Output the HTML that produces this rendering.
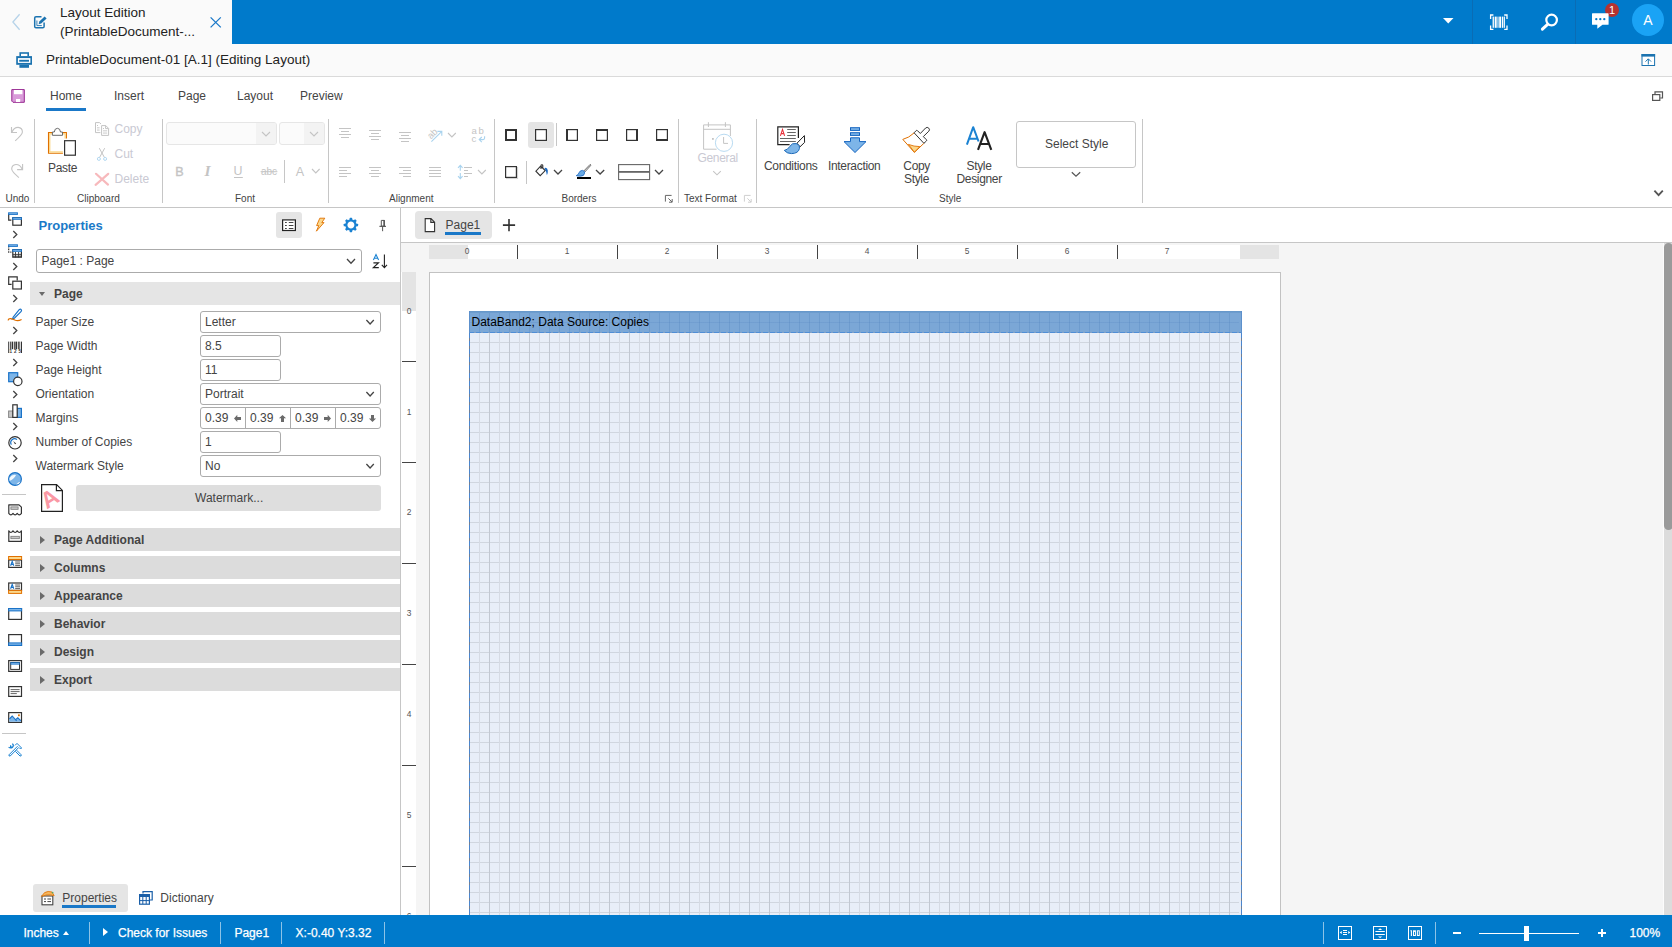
<!DOCTYPE html>
<html><head><meta charset="utf-8"><title>Layout Edition</title>
<style>
html,body{margin:0;padding:0}
body{width:1672px;height:947px;overflow:hidden;position:relative;background:#fff;font-family:"Liberation Sans",sans-serif;}
body>div,body>svg{position:absolute;}
.t{white-space:nowrap;}
svg{overflow:visible}
</style></head>
<body>
<div style="left:0px;top:0px;width:1672px;height:44px;background:#007acb"></div>
<div style="left:0px;top:0px;width:232px;height:44px;background:#fafafa"></div>
<div class="t" style="left:60px;top:6px;font-size:13.5px;line-height:13.5px;color:#222;">Layout Edition</div>
<div class="t" style="left:60px;top:25px;font-size:13.5px;line-height:13.5px;color:#222;">(PrintableDocument-...</div>
<div style="left:1472px;top:0px;width:1px;height:44px;background:#0a6cb4"></div>
<div style="left:1575px;top:0px;width:1px;height:44px;background:#0a6cb4"></div>
<div style="left:1632px;top:4px;width:32px;height:32px;background:#1aa3f5;border-radius:50%"></div>
<div class="t" style="left:1632px;top:13px;font-size:14px;line-height:14px;color:#fff;width:32px;text-align:center;">A</div>
<div style="left:1605px;top:3px;width:14px;height:14px;background:#b5322f;border-radius:50%"></div>
<div class="t" style="left:1605px;top:5px;font-size:11px;line-height:11px;color:#fff;width:14px;text-align:center;">1</div>
<div style="left:0px;top:44px;width:1672px;height:32px;background:#fafafa"></div>
<div style="left:0px;top:76px;width:1672px;height:1px;background:#dadada"></div>
<div class="t" style="left:46px;top:53px;font-size:13.5px;line-height:13.5px;color:#222;">PrintableDocument-01 [A.1] (Editing Layout)</div>
<div style="left:0px;top:77px;width:1672px;height:130px;background:#fff"></div>
<div class="t" style="left:50px;top:90px;font-size:12px;line-height:12px;color:#444;">Home</div>
<div class="t" style="left:114px;top:90px;font-size:12px;line-height:12px;color:#444;">Insert</div>
<div class="t" style="left:178px;top:90px;font-size:12px;line-height:12px;color:#444;">Page</div>
<div class="t" style="left:237px;top:90px;font-size:12px;line-height:12px;color:#444;">Layout</div>
<div class="t" style="left:300px;top:90px;font-size:12px;line-height:12px;color:#444;">Preview</div>
<div style="left:46px;top:108px;width:40px;height:3px;background:#1a78c8"></div>
<div style="left:0px;top:207px;width:1672px;height:1px;background:#c6c6c6"></div>
<div style="left:34px;top:119px;width:1px;height:84px;background:#c6c6c6"></div>
<div style="left:162px;top:119px;width:1px;height:84px;background:#c6c6c6"></div>
<div style="left:328px;top:119px;width:1px;height:84px;background:#c6c6c6"></div>
<div style="left:494px;top:119px;width:1px;height:84px;background:#c6c6c6"></div>
<div style="left:678px;top:119px;width:1px;height:84px;background:#c6c6c6"></div>
<div style="left:756px;top:119px;width:1px;height:84px;background:#c6c6c6"></div>
<div style="left:1142px;top:119px;width:1px;height:84px;background:#c6c6c6"></div>
<div class="t" style="left:5.5px;top:194px;font-size:10px;line-height:10px;color:#444;">Undo</div>
<div class="t" style="left:77px;top:194px;font-size:10px;line-height:10px;color:#444;">Clipboard</div>
<div class="t" style="left:235px;top:194px;font-size:10px;line-height:10px;color:#444;">Font</div>
<div class="t" style="left:389px;top:194px;font-size:10px;line-height:10px;color:#444;">Alignment</div>
<div class="t" style="left:561.5px;top:194px;font-size:10px;line-height:10px;color:#444;">Borders</div>
<div class="t" style="left:684px;top:194px;font-size:10px;line-height:10px;color:#444;">Text Format</div>
<div class="t" style="left:939px;top:194px;font-size:10px;line-height:10px;color:#444;">Style</div>
<div class="t" style="left:48px;top:162px;font-size:12px;line-height:12px;color:#444;letter-spacing:-0.33px">Paste</div>
<div class="t" style="left:114.5px;top:123px;font-size:12px;line-height:12px;color:#c9c9d3;">Copy</div>
<div class="t" style="left:114.5px;top:148px;font-size:12px;line-height:12px;color:#c9c9d3;">Cut</div>
<div class="t" style="left:114.5px;top:173px;font-size:12px;line-height:12px;color:#c9c9d3;">Delete</div>
<div style="left:166px;top:122px;width:111px;height:23px;box-sizing:border-box;border:1px solid #e6e6e6;border-radius:3px;background:#fbfbfb"></div>
<div style="left:256px;top:123px;width:20px;height:21px;background:#f3f3f3;border-radius:0 2px 2px 0"></div>
<div style="left:279px;top:122px;width:46px;height:23px;box-sizing:border-box;border:1px solid #e6e6e6;border-radius:3px;background:#fbfbfb"></div>
<div style="left:304px;top:123px;width:20px;height:21px;background:#f3f3f3;border-radius:0 2px 2px 0"></div>
<div style="left:284px;top:160px;width:1px;height:23px;background:#c6c6c6"></div>
<div style="left:556px;top:123px;width:1px;height:23px;background:#c6c6c6"></div>
<div style="left:526px;top:161px;width:1px;height:23px;background:#c6c6c6"></div>
<div style="left:528px;top:122px;width:26px;height:26px;background:#e5e5e5;border-radius:3px"></div>
<div class="t" style="left:697.5px;top:152px;font-size:12px;line-height:12px;color:#c9c9d3;letter-spacing:-0.33px">General</div>
<div class="t" style="left:764px;top:160px;font-size:12px;line-height:12px;color:#444;letter-spacing:-0.33px">Conditions</div>
<div class="t" style="left:828px;top:160px;font-size:12px;line-height:12px;color:#444;letter-spacing:-0.33px">Interaction</div>
<div class="t" style="left:903.3px;top:160px;font-size:12px;line-height:12px;color:#444;letter-spacing:-0.33px">Copy</div>
<div class="t" style="left:904px;top:173px;font-size:12px;line-height:12px;color:#444;letter-spacing:-0.33px">Style</div>
<div class="t" style="left:966.5px;top:160px;font-size:12px;line-height:12px;color:#444;letter-spacing:-0.33px">Style</div>
<div class="t" style="left:956.5px;top:173px;font-size:12px;line-height:12px;color:#444;letter-spacing:-0.33px">Designer</div>
<div style="left:1016px;top:121px;width:120px;height:47px;box-sizing:border-box;border:1px solid #c6c6c6;border-radius:3px;background:#fff"></div>
<div class="t" style="left:1045px;top:138px;font-size:12px;line-height:12px;color:#444;">Select Style</div>
<div style="left:0px;top:208px;width:400px;height:707px;background:#fff"></div>
<div style="left:400px;top:208px;width:1px;height:707px;background:#c6c6c6"></div>
<div class="t" style="left:38.5px;top:219px;font-size:13px;line-height:13px;color:#1a7ac8;font-weight:bold;">Properties</div>
<div style="left:276px;top:212px;width:26px;height:26px;background:#e5e5e5;border-radius:3px"></div>
<div style="left:36px;top:249px;width:326px;height:24px;box-sizing:border-box;border:1px solid #ababab;border-radius:3px;background:#fff"></div>
<div class="t" style="left:41.5px;top:255px;font-size:12px;line-height:12px;color:#444;">Page1 : Page</div>
<div style="left:30px;top:282px;width:370px;height:23px;background:#e5e5e5"></div>
<div class="t" style="left:54px;top:288px;font-size:12px;line-height:12px;color:#444;font-weight:bold;">Page</div>
<div style="left:39px;top:292px;width:0;height:0;border-left:3.5px solid transparent;border-right:3.5px solid transparent;border-top:4.5px solid #6a6a6a"></div>
<div class="t" style="left:35.5px;top:316px;font-size:12px;line-height:12px;color:#444;">Paper Size</div>
<div style="left:200px;top:311px;width:181px;height:22px;box-sizing:border-box;border:1px solid #ababab;border-radius:3px;background:#fff"></div>
<div class="t" style="left:205px;top:316px;font-size:12px;line-height:12px;color:#444;">Letter</div>
<div class="t" style="left:35.5px;top:340px;font-size:12px;line-height:12px;color:#444;">Page Width</div>
<div style="left:200px;top:335px;width:81px;height:22px;box-sizing:border-box;border:1px solid #ababab;border-radius:3px;background:#fff"></div>
<div class="t" style="left:205px;top:340px;font-size:12px;line-height:12px;color:#444;">8.5</div>
<div class="t" style="left:35.5px;top:364px;font-size:12px;line-height:12px;color:#444;">Page Height</div>
<div style="left:200px;top:359px;width:81px;height:22px;box-sizing:border-box;border:1px solid #ababab;border-radius:3px;background:#fff"></div>
<div class="t" style="left:205px;top:364px;font-size:12px;line-height:12px;color:#444;">11</div>
<div class="t" style="left:35.5px;top:388px;font-size:12px;line-height:12px;color:#444;">Orientation</div>
<div style="left:200px;top:383px;width:181px;height:22px;box-sizing:border-box;border:1px solid #ababab;border-radius:3px;background:#fff"></div>
<div class="t" style="left:205px;top:388px;font-size:12px;line-height:12px;color:#444;">Portrait</div>
<div class="t" style="left:35.5px;top:412px;font-size:12px;line-height:12px;color:#444;">Margins</div>
<div style="left:200px;top:407px;width:181px;height:22px;box-sizing:border-box;border:1px solid #ababab;border-radius:3px;background:#fff"></div>
<div class="t" style="left:205px;top:412px;font-size:12px;line-height:12px;color:#444;">0.39</div>
<div class="t" style="left:250px;top:412px;font-size:12px;line-height:12px;color:#444;">0.39</div>
<div style="left:245px;top:408px;width:1px;height:20px;background:#ababab"></div>
<div class="t" style="left:295px;top:412px;font-size:12px;line-height:12px;color:#444;">0.39</div>
<div style="left:290px;top:408px;width:1px;height:20px;background:#ababab"></div>
<div class="t" style="left:340px;top:412px;font-size:12px;line-height:12px;color:#444;">0.39</div>
<div style="left:335px;top:408px;width:1px;height:20px;background:#ababab"></div>
<div class="t" style="left:35.5px;top:436px;font-size:12px;line-height:12px;color:#444;">Number of Copies</div>
<div style="left:200px;top:431px;width:81px;height:22px;box-sizing:border-box;border:1px solid #ababab;border-radius:3px;background:#fff"></div>
<div class="t" style="left:205px;top:436px;font-size:12px;line-height:12px;color:#444;">1</div>
<div class="t" style="left:35.5px;top:460px;font-size:12px;line-height:12px;color:#444;">Watermark Style</div>
<div style="left:200px;top:455px;width:181px;height:22px;box-sizing:border-box;border:1px solid #ababab;border-radius:3px;background:#fff"></div>
<div class="t" style="left:205px;top:460px;font-size:12px;line-height:12px;color:#444;">No</div>
<div style="left:76px;top:485px;width:305px;height:26px;background:#dedede;border-radius:3px"></div>
<div class="t" style="left:195px;top:492px;font-size:12px;line-height:12px;color:#444;">Watermark...</div>
<div style="left:30px;top:528px;width:370px;height:23px;background:#dcdcdc"></div>
<div class="t" style="left:54px;top:534px;font-size:12px;line-height:12px;color:#444;font-weight:bold;">Page Additional</div>
<div style="left:40px;top:535.5px;width:0;height:0;border-top:4px solid transparent;border-bottom:4px solid transparent;border-left:5px solid #6a6a6a"></div>
<div style="left:30px;top:556px;width:370px;height:23px;background:#dcdcdc"></div>
<div class="t" style="left:54px;top:562px;font-size:12px;line-height:12px;color:#444;font-weight:bold;">Columns</div>
<div style="left:40px;top:563.5px;width:0;height:0;border-top:4px solid transparent;border-bottom:4px solid transparent;border-left:5px solid #6a6a6a"></div>
<div style="left:30px;top:584px;width:370px;height:23px;background:#dcdcdc"></div>
<div class="t" style="left:54px;top:590px;font-size:12px;line-height:12px;color:#444;font-weight:bold;">Appearance</div>
<div style="left:40px;top:591.5px;width:0;height:0;border-top:4px solid transparent;border-bottom:4px solid transparent;border-left:5px solid #6a6a6a"></div>
<div style="left:30px;top:612px;width:370px;height:23px;background:#dcdcdc"></div>
<div class="t" style="left:54px;top:618px;font-size:12px;line-height:12px;color:#444;font-weight:bold;">Behavior</div>
<div style="left:40px;top:619.5px;width:0;height:0;border-top:4px solid transparent;border-bottom:4px solid transparent;border-left:5px solid #6a6a6a"></div>
<div style="left:30px;top:640px;width:370px;height:23px;background:#dcdcdc"></div>
<div class="t" style="left:54px;top:646px;font-size:12px;line-height:12px;color:#444;font-weight:bold;">Design</div>
<div style="left:40px;top:647.5px;width:0;height:0;border-top:4px solid transparent;border-bottom:4px solid transparent;border-left:5px solid #6a6a6a"></div>
<div style="left:30px;top:668px;width:370px;height:23px;background:#dcdcdc"></div>
<div class="t" style="left:54px;top:674px;font-size:12px;line-height:12px;color:#444;font-weight:bold;">Export</div>
<div style="left:40px;top:675.5px;width:0;height:0;border-top:4px solid transparent;border-bottom:4px solid transparent;border-left:5px solid #6a6a6a"></div>
<div style="left:2px;top:494px;width:24px;height:1px;background:#c6c6c6"></div>
<div style="left:2px;top:733px;width:24px;height:1px;background:#c6c6c6"></div>
<div style="left:33px;top:884px;width:95px;height:28px;background:#e5e5e5;border-radius:3px"></div>
<div class="t" style="left:62.3px;top:892px;font-size:12px;line-height:12px;color:#444;">Properties</div>
<div style="left:62px;top:905px;width:54px;height:3px;background:#1a78c8"></div>
<div class="t" style="left:160.3px;top:892px;font-size:12px;line-height:12px;color:#444;">Dictionary</div>
<div style="left:401px;top:208px;width:1271px;height:34px;background:#fff"></div>
<div style="left:401px;top:242px;width:1271px;height:1px;background:#c6c6c6"></div>
<div style="left:415px;top:211px;width:77px;height:28px;background:#e5e5e5;border-radius:4px"></div>
<div class="t" style="left:445.6px;top:219px;font-size:12px;line-height:12px;color:#444;">Page1</div>
<div style="left:445px;top:232px;width:36px;height:3px;background:#1a78c8"></div>
<div style="left:401px;top:243px;width:1271px;height:672px;background:#f5f5f5"></div>
<div style="left:429px;top:245px;width:850px;height:14px;background:#e4e4e4"></div>
<div style="left:468px;top:245px;width:772px;height:14px;background:#fff"></div>
<div class="t" style="left:457px;top:247px;font-size:8.4px;line-height:8.4px;color:#555;width:20px;text-align:center;">0</div>
<div class="t" style="left:557px;top:247px;font-size:8.4px;line-height:8.4px;color:#555;width:20px;text-align:center;">1</div>
<div class="t" style="left:657px;top:247px;font-size:8.4px;line-height:8.4px;color:#555;width:20px;text-align:center;">2</div>
<div class="t" style="left:757px;top:247px;font-size:8.4px;line-height:8.4px;color:#555;width:20px;text-align:center;">3</div>
<div class="t" style="left:857px;top:247px;font-size:8.4px;line-height:8.4px;color:#555;width:20px;text-align:center;">4</div>
<div class="t" style="left:957px;top:247px;font-size:8.4px;line-height:8.4px;color:#555;width:20px;text-align:center;">5</div>
<div class="t" style="left:1057px;top:247px;font-size:8.4px;line-height:8.4px;color:#555;width:20px;text-align:center;">6</div>
<div class="t" style="left:1157px;top:247px;font-size:8.4px;line-height:8.4px;color:#555;width:20px;text-align:center;">7</div>
<div style="left:517px;top:245px;width:1px;height:14px;background:#444"></div>
<div style="left:617px;top:245px;width:1px;height:14px;background:#444"></div>
<div style="left:717px;top:245px;width:1px;height:14px;background:#444"></div>
<div style="left:817px;top:245px;width:1px;height:14px;background:#444"></div>
<div style="left:917px;top:245px;width:1px;height:14px;background:#444"></div>
<div style="left:1017px;top:245px;width:1px;height:14px;background:#444"></div>
<div style="left:1117px;top:245px;width:1px;height:14px;background:#444"></div>
<div style="left:401px;top:272px;width:15px;height:643px;background:#fff"></div>
<div style="left:402px;top:272px;width:14px;height:39px;background:#e4e4e4"></div>
<div class="t" style="left:402px;top:307px;font-size:8.4px;line-height:8.4px;color:#555;width:14px;text-align:center;">0</div>
<div class="t" style="left:402px;top:408px;font-size:8.4px;line-height:8.4px;color:#555;width:14px;text-align:center;">1</div>
<div class="t" style="left:402px;top:508px;font-size:8.4px;line-height:8.4px;color:#555;width:14px;text-align:center;">2</div>
<div class="t" style="left:402px;top:609px;font-size:8.4px;line-height:8.4px;color:#555;width:14px;text-align:center;">3</div>
<div class="t" style="left:402px;top:710px;font-size:8.4px;line-height:8.4px;color:#555;width:14px;text-align:center;">4</div>
<div class="t" style="left:402px;top:811px;font-size:8.4px;line-height:8.4px;color:#555;width:14px;text-align:center;">5</div>
<div class="t" style="left:402px;top:912px;font-size:8.4px;line-height:8.4px;color:#555;width:14px;text-align:center;">6</div>
<div style="left:402px;top:361px;width:14px;height:1px;background:#444"></div>
<div style="left:402px;top:462px;width:14px;height:1px;background:#444"></div>
<div style="left:402px;top:563px;width:14px;height:1px;background:#444"></div>
<div style="left:402px;top:664px;width:14px;height:1px;background:#444"></div>
<div style="left:402px;top:765px;width:14px;height:1px;background:#444"></div>
<div style="left:402px;top:866px;width:14px;height:1px;background:#444"></div>
<div style="left:429px;top:272px;width:852px;height:660px;box-sizing:border-box;border:1px solid #c2c2c2;background:#fff"></div>
<div style="left:469px;top:311px;width:773px;height:620px;background:#e8eef8"></div>
<div style="left:469px;top:311px;width:770px;height:620px;background-image:linear-gradient(to right,#c2c8d2 1px,transparent 1px),linear-gradient(to right,#d6dbe4 1px,transparent 1px),linear-gradient(to bottom,#d0d6df 1px,transparent 1px);background-size:20px 10px,20px 10px,10px 10px;background-position:0px 0px,10px 0px,0px 1px;"></div>
<div style="left:469px;top:311px;width:773px;height:22px;background:#7ba7d6"></div>
<div style="left:469px;top:311px;width:770px;height:22px;background-image:linear-gradient(to right,rgba(80,130,190,.30) 1px,transparent 1px),linear-gradient(to bottom,rgba(80,130,190,.22) 1px,transparent 1px);background-size:10px 10px;background-position:0 1px"></div>
<div style="left:469px;top:311px;width:773px;height:2px;background:linear-gradient(to bottom,#6496c8,#709fd0)"></div>
<div style="left:469px;top:332px;width:773px;height:1px;background:repeating-linear-gradient(to right,#4f8ed6 0 5px,#7f9fc4 5px 7px)"></div>
<div style="left:469px;top:333px;width:1px;height:600px;background:repeating-linear-gradient(to bottom,#4a86cf 0 5px,#6f7f96 5px 8px)"></div>
<div style="left:1241px;top:333px;width:1px;height:600px;background:repeating-linear-gradient(to bottom,#4a86cf 0 5px,#6f7f96 5px 8px)"></div>
<div style="left:469px;top:311px;width:1px;height:22px;background:#5c90cc"></div>
<div style="left:1241px;top:311px;width:1px;height:22px;background:#5c90cc"></div>
<div class="t" style="left:471.5px;top:316px;font-size:12px;line-height:12px;color:#000;">DataBand2; Data Source: Copies</div>
<div style="left:1663px;top:243px;width:1px;height:672px;background:#fcfcfc"></div>
<div style="left:1664px;top:243px;width:8px;height:672px;background:#dcdcdc"></div>
<div style="left:1664px;top:243px;width:9px;height:287px;background:#9a9a9a;border-radius:4.5px"></div>
<div style="left:0px;top:915px;width:1672px;height:32px;background:#007acb"></div>
<div class="t" style="left:23.4px;top:927px;font-size:12px;line-height:12px;color:#fff;-webkit-text-stroke:0.25px #fff">Inches</div>
<div class="t" style="left:118px;top:927px;font-size:12px;line-height:12px;color:#fff;-webkit-text-stroke:0.25px #fff">Check for Issues</div>
<div class="t" style="left:234.4px;top:927px;font-size:12px;line-height:12px;color:#fff;-webkit-text-stroke:0.25px #fff">Page1</div>
<div class="t" style="left:295.6px;top:927px;font-size:12px;line-height:12px;color:#fff;-webkit-text-stroke:0.25px #fff">X:-0.40 Y:3.32</div>
<div class="t" style="left:1629.5px;top:927px;font-size:12px;line-height:12px;color:#fff;-webkit-text-stroke:0.25px #fff">100%</div>
<div style="left:89px;top:922px;width:1px;height:22px;background:rgba(255,255,255,.55)"></div>
<div style="left:220px;top:922px;width:1px;height:22px;background:rgba(255,255,255,.55)"></div>
<div style="left:281px;top:922px;width:1px;height:22px;background:rgba(255,255,255,.55)"></div>
<div style="left:384px;top:922px;width:1px;height:22px;background:rgba(255,255,255,.55)"></div>
<div style="left:1323px;top:922px;width:1px;height:22px;background:rgba(255,255,255,.55)"></div>
<div style="left:1435px;top:922px;width:1px;height:22px;background:rgba(255,255,255,.55)"></div>
<div style="left:62.5px;top:931px;width:0;height:0;border-left:3.5px solid transparent;border-right:3.5px solid transparent;border-bottom:4px solid #fff"></div>
<div style="left:103px;top:928px;width:0;height:0;border-top:4.5px solid transparent;border-bottom:4.5px solid transparent;border-left:5.5px solid #fff"></div>
<div style="left:1453px;top:932px;width:8px;height:2px;background:#fff"></div>
<div style="left:1479px;top:933px;width:100px;height:1px;background:#fff"></div>
<div style="left:1524px;top:926px;width:5px;height:15px;background:#fff"></div>
<div style="left:1598px;top:932px;width:8px;height:2px;background:#fff"></div>
<div style="left:1601px;top:929px;width:2px;height:8px;background:#fff"></div>
<svg style="left:0px;top:0px;" width="232" height="44" viewBox="0 0 232 44"><path d="M19.6 14.3 L12.9 22 L19.6 29.7" fill="none" stroke="#b6d3e9" stroke-width="1.3"/><path d="M41.5 16.7 H36 Q34.7 16.7 34.7 18 V26.4 Q34.7 27.7 36 27.7 H42.8 Q44.1 27.7 44.1 26.4 V22.5" fill="none" stroke="#1b73b0" stroke-width="1.5"/><path d="M36.9 20.5 V25.6 H41.8" fill="none" stroke="#1b73b0" stroke-width="0.9"/><path d="M38.6 24.2 L39.3 21.6 L44.6 16.6 L46.6 18.6 L41.2 23.6 Z" fill="#1b73b0"/><path d="M210.6 17.4 L220.8 27.4 M220.8 17.4 L210.6 27.4" fill="none" stroke="#1a78c8" stroke-width="1.3"/></svg>
<svg style="left:0px;top:44px;" width="60" height="32" viewBox="0 0 60 32"><rect x="19.4" y="8.2" width="9.6" height="4" fill="#1b73b0"/><rect x="21" y="9.8" width="6.4" height="2.4" fill="#fff"/><rect x="16.2" y="12.1" width="15.8" height="8.7" fill="#1b73b0"/><rect x="17.9" y="14.1" width="12.5" height="4.8" fill="#fff"/><rect x="19.2" y="15.8" width="9.8" height="1.9" fill="#1b73b0"/><rect x="19.4" y="20.8" width="9.6" height="3" fill="#1b73b0"/></svg>
<svg style="left:0px;top:80px;" width="40" height="30" viewBox="0 0 40 30"><path d="M11.8 9.6 H24.3 V22.3 H13 L11.8 21.1 Z" fill="#d99bd9" stroke="#96278f" stroke-width="1"/><rect x="14" y="10" width="8.4" height="4.2" fill="#fff"/><rect x="16" y="19" width="4.2" height="3" fill="#fff"/></svg>
<svg style="left:1430px;top:0px;" width="242" height="110" viewBox="0 0 242 110"><path d="M13 18 H23.5 L18.25 23.6 Z" fill="#fff"/><path d="M63.4 15 H60.6 V19 M60.6 25.4 V29.4 H63.4 M74.2 15 H77 V19 M77 25.4 V29.4 H74.2" fill="none" stroke="#fff" stroke-width="1.3"/><g fill="#fff"><rect x="62.6" y="16.6" width="1.3" height="11.2"/><rect x="64.7" y="16.6" width="2" height="11.2"/><rect x="67.5" y="16.6" width="1" height="11.2"/><rect x="69.2" y="16.6" width="2" height="11.2"/><rect x="72" y="16.6" width="1" height="11.2"/><rect x="73.6" y="16.6" width="1.3" height="11.2"/></g><circle cx="121.6" cy="20" r="5.3" fill="none" stroke="#fff" stroke-width="2.2"/><path d="M117.6 24.3 L112.4 29.2" stroke="#fff" stroke-width="3" stroke-linecap="round"/><path d="M162.6 13.2 H178 Q178.6 13.2 178.6 13.8 V24.2 Q178.6 24.8 178 24.8 H172.5 L167.3 28.8 V24.8 H162.6 Q162 24.8 162 24.2 V13.8 Q162 13.2 162.6 13.2 Z" fill="#fff"/><g fill="#0078c8"><circle cx="166.3" cy="19.2" r="1.15"/><circle cx="170.3" cy="19.2" r="1.15"/><circle cx="174.3" cy="19.2" r="1.15"/></g><rect x="212" y="54.5" width="12.6" height="11" fill="#fff" stroke="#1b73b0" stroke-width="1"/><rect x="211.5" y="54" width="13.6" height="2.6" fill="#1b73b0"/><path d="M218.3 64.5 V59 M215.5 61.6 L218.3 58.8 L221.1 61.6" fill="none" stroke="#1b73b0" stroke-width="1"/><path d="M225 94 V91.8 H232.5 V98 H230.3" fill="none" stroke="#555" stroke-width="1.2"/><rect x="222.6" y="94.6" width="7.2" height="5.8" fill="#fff" stroke="#555" stroke-width="1.2"/></svg>
<svg style="left:0px;top:0px;font-family:'Liberation Sans',sans-serif" width="1672" height="210" viewBox="0 0 1672 210"><path d="M11.5 127 V132.5 H17 M12 132 Q14 127.3 18.2 127.4 Q22.4 127.8 22.4 132 Q22.3 134.6 15.2 140.8" fill="none" stroke="#c4c4c4" stroke-width="1.1"/><path d="M22.6 164 V169.6 H17.1 M22.1 169.1 Q20.1 164.4 15.9 164.5 Q11.7 164.9 11.7 169.1 Q11.8 171.7 18.9 177.6" fill="none" stroke="#c4c4c4" stroke-width="1.1"/><path d="M66.4 138.5 V132.5 H48.5 V153.2 H62.9" fill="none" stroke="#e07000" stroke-width="1.1"/><path d="M65.2 138.5 V133.7 H49.7 V152 H62.9" fill="none" stroke="#fbd78b" stroke-width="1.4"/><path d="M52.4 135.3 V132 H54.3 Q54.6 128.3 57.4 128.3 Q60.2 128.3 60.5 132 H62.5 V135.3 Z" fill="#fff" stroke="#6a6a6a" stroke-width="1"/><rect x="64.6" y="140.7" width="10.8" height="14.5" fill="#fff" stroke="#333" stroke-width="1.2"/><path d="M100.4 132.6 H95.5 V122.6 H99.5 L101 124" fill="none" stroke="#c4c4c4" stroke-width="1"/><g fill="#c4c4c4"><rect x="97" y="125" width="1" height="1"/><rect x="97" y="127.4" width="2.6" height="0.9"/><rect x="97" y="129.6" width="2.6" height="0.9"/></g><path d="M101.6 125.6 H105.8 L108.6 128.4 V135.4 H101.6 Z M105.6 125.8 V128.6 H108.4" fill="#fff" stroke="#c4c4c4" stroke-width="1"/><g fill="#c4c4c4"><rect x="103" y="128" width="1" height="1"/><rect x="103" y="130.4" width="4.2" height="0.9"/><rect x="103" y="132.6" width="4.2" height="0.9"/></g><path d="M99.3 148.2 L104.2 157 M104.7 148.2 L99.8 157" fill="none" stroke="#c4c4c4" stroke-width="1"/><circle cx="98.9" cy="158.9" r="1.5" fill="none" stroke="#a9d3ee" stroke-width="0.9"/><circle cx="105.1" cy="158.9" r="1.5" fill="none" stroke="#a9d3ee" stroke-width="0.9"/><path d="M96 173.8 L108 184.6 M108.2 173.8 L95.6 184.8" fill="none" stroke="#f7b9bc" stroke-width="2.2" stroke-linecap="round"/><path d="M262 132 L266.0 136 L270 132" fill="none" stroke="#c4c4c4" stroke-width="1.1"/><path d="M310 132 L314.0 136 L318 132" fill="none" stroke="#c4c4c4" stroke-width="1.1"/><text x="175.2" y="175.5" font-size="12.6" fill="#c4c4c4" stroke="#c4c4c4" stroke-width="0.35">B</text><text x="204.6" y="175.6" font-size="15.5" font-family="Liberation Serif" font-style="italic" font-weight="bold" fill="#c4c4c4">I</text><text x="233.6" y="175.3" font-size="12.4" fill="#c4c4c4">U</text><rect x="234" y="177" width="8.8" height="1" fill="#c4c4c4"/><text x="261" y="175.3" font-size="10" fill="#c4c4c4">abc</text><rect x="260.6" y="171.2" width="16.8" height="1" fill="#c4c4c4"/><text x="295.8" y="175.5" font-size="12.6" fill="#c4c4c4">A</text><path d="M312 169 L315.8 173 L319.6 169" fill="none" stroke="#c4c4c4" stroke-width="1.1"/><rect x="339" y="128" width="12" height="1" fill="#c4c4c4"/><rect x="341" y="131" width="8" height="1" fill="#c4c4c4"/><rect x="339" y="134" width="12" height="1" fill="#c4c4c4"/><rect x="341" y="137" width="8" height="1" fill="#c4c4c4"/><rect x="369" y="130" width="12" height="1" fill="#c4c4c4"/><rect x="371" y="133" width="8" height="1" fill="#c4c4c4"/><rect x="369" y="136" width="12" height="1" fill="#c4c4c4"/><rect x="371" y="139" width="8" height="1" fill="#c4c4c4"/><rect x="399" y="132" width="12" height="1" fill="#c4c4c4"/><rect x="401" y="135" width="8" height="1" fill="#c4c4c4"/><rect x="399" y="138" width="12" height="1" fill="#c4c4c4"/><rect x="401" y="141" width="8" height="1" fill="#c4c4c4"/><rect x="339" y="167" width="12" height="1" fill="#c4c4c4"/><rect x="339" y="170" width="8" height="1" fill="#c4c4c4"/><rect x="339" y="173" width="12" height="1" fill="#c4c4c4"/><rect x="339" y="176" width="8" height="1" fill="#c4c4c4"/><rect x="369" y="167" width="12" height="1" fill="#c4c4c4"/><rect x="371" y="170" width="8" height="1" fill="#c4c4c4"/><rect x="369" y="173" width="12" height="1" fill="#c4c4c4"/><rect x="371" y="176" width="8" height="1" fill="#c4c4c4"/><rect x="399" y="167" width="12" height="1" fill="#c4c4c4"/><rect x="403" y="170" width="8" height="1" fill="#c4c4c4"/><rect x="399" y="173" width="12" height="1" fill="#c4c4c4"/><rect x="403" y="176" width="8" height="1" fill="#c4c4c4"/><rect x="429" y="167" width="12" height="1" fill="#c4c4c4"/><rect x="429" y="170" width="12" height="1" fill="#c4c4c4"/><rect x="429" y="173" width="12" height="1" fill="#c4c4c4"/><rect x="429" y="176" width="12" height="1" fill="#c4c4c4"/><text transform="translate(430.9,139.6) rotate(-45)" font-size="9.4" fill="#c4c4c4">ab</text><path d="M431.4 141.6 L441.6 131.6 M437.4 131.4 H441.8 V135.8" fill="none" stroke="#a9d3ee" stroke-width="1.1"/><path d="M448 133 L451.9 137 L455.8 133" fill="none" stroke="#c4c4c4" stroke-width="1.1"/><text x="471.6" y="134.4" font-size="9.6" fill="#c4c4c4" letter-spacing="1.6">ab</text><text x="471.6" y="141.8" font-size="9.6" fill="#c4c4c4">c</text><path d="M484.6 136.2 V138 Q484.6 139.6 483 139.6 H479.4 M481.8 137 L479.2 139.6 L481.8 142.2" fill="none" stroke="#a9d3ee" stroke-width="1.1"/><path d="M460.3 165.4 V170.8 M458 167.8 L460.3 165.4 L462.6 167.8 M460.3 173 V178.6 M458 176.2 L460.3 178.6 L462.6 176.2" fill="none" stroke="#a9d3ee" stroke-width="1.1"/><rect x="464" y="167" width="8" height="1" fill="#c4c4c4"/><rect x="464" y="170" width="4" height="1" fill="#c4c4c4"/><rect x="464" y="173" width="8" height="1" fill="#c4c4c4"/><rect x="464" y="176" width="4" height="1" fill="#c4c4c4"/><path d="M478 170 L481.9 174 L485.8 170" fill="none" stroke="#c4c4c4" stroke-width="1.1"/><rect x="506" y="130" width="10" height="10" fill="none" stroke="#333" stroke-width="2"/><rect x="535.6" y="129.6" width="10.8" height="10.8" fill="#fff" stroke="#333" stroke-width="1.2"/><rect x="566.6" y="129.6" width="10.8" height="10.8" fill="#fff" stroke="#333" stroke-width="1.2"/><rect x="566" y="129" width="2" height="12" fill="#333"/><rect x="596.6" y="129.6" width="10.8" height="10.8" fill="#fff" stroke="#333" stroke-width="1.2"/><rect x="596" y="129" width="12" height="2" fill="#333"/><rect x="626.6" y="129.6" width="10.8" height="10.8" fill="#fff" stroke="#333" stroke-width="1.2"/><rect x="636" y="129" width="2" height="12" fill="#333"/><rect x="656.6" y="129.6" width="10.8" height="10.8" fill="#fff" stroke="#333" stroke-width="1.2"/><rect x="656" y="139" width="12" height="2" fill="#333"/><rect x="506.4" y="167.4" width="11.2" height="11.2" fill="none" stroke="#cfcfcf" stroke-width="1"/><rect x="505.6" y="166.6" width="10.8" height="10.8" fill="#fff" stroke="#333" stroke-width="1.2"/><path d="M540.6 166.2 L535.9 171.2 L540.2 175.6 L545.2 170.6 L541.2 166.6 M541 169 V165.6 Q541 164.7 541.9 164.7 Q542.8 164.7 542.8 165.6 V168" fill="none" stroke="#333" stroke-width="1.1"/><path d="M544.4 168 Q547.4 167.2 547.8 170.4 Q548 173 546.9 175.2 Q546.5 172 545.6 170.2 Z" fill="#1565c0"/><path d="M554 170 L558.0 174 L562 170" fill="none" stroke="#444" stroke-width="1.3"/><path d="M583.6 171.2 L590.2 164.4 L591 165.2 L584.6 172.2" fill="#fff" stroke="#555" stroke-width="0.9"/><path d="M576.2 175.6 Q578.2 175.2 579 172.8 Q580 170.2 582.6 170.4 Q584.8 170.8 584.6 173.2 Q584.2 176.2 580.4 176.2 Q578 176.2 576.2 175.6 Z" fill="#6aaae4" stroke="#1565c0" stroke-width="0.8"/><rect x="577" y="177" width="14" height="2" fill="#000"/><path d="M596 170 L600.1 174 L604.2 170" fill="none" stroke="#444" stroke-width="1.3"/><rect x="618.6" y="164.6" width="31" height="15" fill="#fff" stroke="#666" stroke-width="1.1"/><rect x="618.6" y="171" width="31" height="1.8" fill="#666"/><path d="M655 170 L659.0 174 L663 170" fill="none" stroke="#444" stroke-width="1.3"/><path d="M665.4 201.6 V195.4 H671.6 M668.4 198.4 L672.0 202.0 M672.1999999999999 199.0 V202.20000000000002 H669.0" fill="none" stroke="#666" stroke-width="1"/><path d="M744.4 201.6 V195.4 H750.6 M747.4 198.4 L751.0 202.0 M751.1999999999999 199.0 V202.20000000000002 H748.0" fill="none" stroke="#cfcfcf" stroke-width="1"/><path d="M730.4 136 V124.9 H703.6 V149.2 H716.6 M703.6 129.3 H730.4 M708.4 122.2 V127 M725.4 122.2 V127" fill="none" stroke="#c4c4c4" stroke-width="1"/><rect x="712" y="138" width="1.8" height="1.8" fill="#c4c4c4"/><circle cx="724" cy="142.8" r="8.6" fill="#fff" stroke="#b9dbf2" stroke-width="1"/><path d="M723.6 137 V143.4 H728" fill="none" stroke="#c4c4c4" stroke-width="1"/><path d="M713.2 171.2 L717.0 174.8 L720.8 171.2" fill="none" stroke="#c4c4c4" stroke-width="1.1"/><path d="M789.6 144.6 H777.8 V126.8 H798.4 V138" fill="none" stroke="#222" stroke-width="1.2"/><path d="M780.4 135.8 L782.5 129.4 L784.6 135.8 M781.2 133.6 H783.8" fill="none" stroke="#e8323c" stroke-width="1.1"/><g fill="#666"><rect x="787.2" y="129" width="8.6" height="1"/><rect x="787.2" y="132" width="8.6" height="1"/><rect x="787.2" y="135" width="8.6" height="1"/><rect x="780" y="138" width="15.8" height="1"/><rect x="780" y="141" width="15.8" height="1"/></g><path d="M797 143.2 L804.4 135.6 L804.6 142.4 L800 146.8 Z" fill="#fff" stroke="#222" stroke-width="1"/><path d="M784.3 150.4 Q788 149.8 789.8 146.4 Q792 142.6 796.2 143.6 Q800 144.8 799.4 148.6 Q798.4 153.4 791.6 153.6 Q787 153.6 784.3 150.4 Z" fill="#7db5e8" stroke="#1a68b8" stroke-width="1"/><rect x="850.5" y="127.7" width="9" height="2.7" fill="#7db5e8" stroke="#1565c0" stroke-width="1"/><rect x="850.5" y="132.7" width="9" height="2.7" fill="#7db5e8" stroke="#1565c0" stroke-width="1"/><path d="M850.5 137.8 H859.5 V141.6 H866 L855 152.5 L844 141.6 H850.5 Z" fill="#7db5e8" stroke="#1565c0" stroke-width="1"/><path d="M914.1 132.9 Q909 137.8 902.8 139.4 L914.4 152.4 L923.9 143.3" fill="#fff" stroke="#e07000" stroke-width="1"/><path d="M908.4 144.4 Q914 146.6 919.8 146.6 L914.4 152.2 Z" fill="#fbd78b" stroke="#e07000" stroke-width="0.9"/><path d="M914.1 132.8 L916.2 130.6 Q916.8 130 917.4 130.6 L920.3 133.5 L925.6 128 Q927.2 126.6 928.8 128.2 Q930.2 129.8 928.8 131.2 L923.3 136.6 L926.4 139.7 Q927 140.4 926.4 141 L923.9 143.3 Z" fill="#fff" stroke="#333" stroke-width="1"/><path d="M966.9 144.6 L973.2 127.2 L978.6 141.5 M969 138.7 H977.6" fill="none" stroke="#1a82d2" stroke-width="2" stroke-linejoin="round"/><path d="M978 149.9 L984.6 132.2 L991.3 149.9 M980.2 144 H989" fill="none" stroke="#222" stroke-width="2.1" stroke-linejoin="round"/><path d="M1071.8 172.2 L1076.0 176.2 L1080.2 172.2" fill="none" stroke="#555" stroke-width="1.2"/><path d="M1654.4 190.6 L1658.6 195.2 L1662.8 190.6" fill="none" stroke="#555" stroke-width="1.8"/></svg>
<svg style="left:0px;top:0px;font-family:'Liberation Sans',sans-serif" width="32" height="760" viewBox="0 0 32 760"><path d="M8.7 214 V220.2 H11.4" fill="none" stroke="#333" stroke-width="1.2"/><rect x="8.1" y="212.3" width="9.8" height="2.6" fill="#1a73c8"/><rect x="9.1" y="213.2" width="7.8" height="0.8" fill="#7db5e8"/><rect x="12.799999999999999" y="217.79999999999998" width="8.600000000000001" height="7.3999999999999995" fill="#fff" stroke="#333" stroke-width="1.2"/><rect x="12.2" y="217.2" width="9.8" height="2.6" fill="#1a73c8"/><rect x="13.2" y="218.2" width="7.800000000000001" height="0.8" fill="#7db5e8"/><path d="M13.3 231 L16.8 234.5 L13.3 238" fill="none" stroke="#444" stroke-width="1.3"/><path d="M8.7 246 V252.2 H11.4" fill="none" stroke="#333" stroke-width="1.2" stroke-dasharray="1.6 1"/><rect x="8.1" y="244.3" width="9.8" height="2.6" fill="#1a73c8"/><rect x="9.1" y="245.2" width="7.8" height="0.8" fill="#7db5e8"/><rect x="12.799999999999999" y="249.79999999999998" width="8.600000000000001" height="7.3999999999999995" fill="#fff" stroke="#333" stroke-width="1.2"/><rect x="12.2" y="249.2" width="9.8" height="2.6" fill="#1a73c8"/><rect x="13.2" y="250.2" width="7.800000000000001" height="0.8" fill="#7db5e8"/><path d="M12.8 254.4 H21.4 M12.8 256.2 H21.4 M15.5 252 V257.4 M18.6 252 V257.4" stroke="#333" stroke-width="0.9"/><path d="M13.3 263 L16.8 266.5 L13.3 270" fill="none" stroke="#444" stroke-width="1.3"/><path d="M11.6 284.4 H8.7 V276.9 H17.2 V280.4" fill="none" stroke="#333" stroke-width="1.2"/><rect x="12.8" y="281.2" width="8.6" height="7.8" fill="#fff" stroke="#333" stroke-width="1.2"/><path d="M13.3 295 L16.8 298.5 L13.3 302" fill="none" stroke="#444" stroke-width="1.3"/><path d="M13.2 317.2 L19.2 309.6 Q20.4 308.6 21.2 309.6 Q22 310.6 21 311.6 L14.4 318.2 L12.4 318.8 Z" fill="#fff" stroke="#1a73c8" stroke-width="1.2"/><path d="M8.2 320.6 Q8.2 318.4 10.6 318.6 Q12.8 319 14.8 320 Q18 321.4 21.6 319.4" fill="none" stroke="#e07000" stroke-width="1.1"/><path d="M13.3 327 L16.8 330.5 L13.3 334" fill="none" stroke="#444" stroke-width="1.3"/><rect x="8.2" y="341.6" width="1" height="11.4" fill="#333"/><rect x="10" y="341.6" width="0.8" height="7.6" fill="#333"/><rect x="11.6" y="341.6" width="1.6" height="7.6" fill="#333"/><rect x="14" y="341.6" width="0.8" height="7.6" fill="#333"/><rect x="15.4" y="341.6" width="1.6" height="7.6" fill="#333"/><rect x="17.8" y="341.6" width="1" height="7.6" fill="#333"/><rect x="19.4" y="341.6" width="0.8" height="7.6" fill="#333"/><rect x="21" y="341.6" width="1" height="11.4" fill="#333"/><text x="9.6" y="353.2" font-size="4.6" font-weight="bold" fill="#333" letter-spacing="0.3">1 2 5</text><path d="M13.3 359 L16.8 362.5 L13.3 366" fill="none" stroke="#444" stroke-width="1.3"/><rect x="8.7" y="372.7" width="9" height="9" fill="#7db5e8" stroke="#1a73c8" stroke-width="1.2"/><circle cx="17.8" cy="381.4" r="4.2" fill="#fff" stroke="#333" stroke-width="1.2"/><path d="M13.3 391 L16.8 394.5 L13.3 398" fill="none" stroke="#444" stroke-width="1.3"/><rect x="8.6" y="411" width="4.4" height="6.4" fill="#c8c8c8" stroke="#888" stroke-width="1"/><rect x="17" y="408.4" width="4.4" height="9" fill="#7db5e8" stroke="#1a73c8" stroke-width="1.2"/><rect x="12.8" y="404.8" width="4.4" height="12.6" fill="#fff" stroke="#333" stroke-width="1.2"/><path d="M13.3 423 L16.8 426.5 L13.3 430" fill="none" stroke="#444" stroke-width="1.3"/><circle cx="15" cy="442.8" r="6.2" fill="#fff" stroke="#333" stroke-width="1.2"/><path d="M11.4 444.6 A3.8 3.8 0 0 1 17 439.6" fill="none" stroke="#1a73c8" stroke-width="1.2"/><path d="M13.2 441 L16.2 443.6 L15 444.2 Z" fill="#333"/><path d="M13.3 455 L16.8 458.5 L13.3 462" fill="none" stroke="#444" stroke-width="1.3"/><circle cx="15" cy="479" r="6.4" fill="#7db5e8" stroke="#1a73c8" stroke-width="1.2"/><path d="M9.4 478 Q12 474.2 16 475 Q14.6 478.6 9.6 481Z" fill="#fff" opacity=".9"/><path d="M16 484.6 Q18.2 481.6 20.8 481.4 Q19.6 484 16 484.6Z" fill="#fff" opacity=".9"/><path d="M8.8 513.4 V504.8 H19 L21.4 507.2 V513.4 q-1.05 1.5 -2.1 1.5 q-1.05 0 -2.1 -1.5 q-1.05 1.5 -2.1 1.5 q-1.05 0 -2.1 -1.5 q-1.05 1.5 -2.1 1.5 q-1.05 0 -2.1 -1.5 Z" fill="#fff" stroke="#333" stroke-width="1.2" stroke-linejoin="round"/><rect x="10.9" y="506.9" width="7.2" height="2.4" fill="#c8c8c8" stroke="#777" stroke-width="0.8"/><path d="M8.8 530.8 V541.4 H21.4 V530.8 q-1.05 1.7 -2.1 1.7 q-1.05 0 -2.1 -1.7 q-1.05 1.7 -2.1 1.7 q-1.05 0 -2.1 -1.7 q-1.05 1.7 -2.1 1.7 q-1.05 0 -2.1 -1.7 Z" fill="#fff" stroke="#333" stroke-width="1.2" stroke-linejoin="round"/><rect x="10.9" y="536.3" width="8.4" height="2.4" fill="#c8c8c8" stroke="#777" stroke-width="0.8"/><rect x="8.7" y="560.0" width="12.8" height="7.4" fill="#fff" stroke="#333" stroke-width="1.2"/><path d="M10.6 565.8 L12.2 561.4 L13.8 565.8 M11.2 564.4 H13.2" fill="none" stroke="#1a73c8" stroke-width="1.1"/><path d="M15.2 562.0 H20 M15.2 563.8 H20 M15.2 565.6 H20" stroke="#333" stroke-width="0.8"/><rect x="8.6" y="556.5" width="13" height="3" fill="#fbd78b" stroke="#e07000" stroke-width="1"/><rect x="8.7" y="583.0" width="12.8" height="7.4" fill="#fff" stroke="#333" stroke-width="1.2"/><path d="M10.6 588.8 L12.2 584.4 L13.8 588.8 M11.2 587.4 H13.2" fill="none" stroke="#1a73c8" stroke-width="1.1"/><path d="M15.2 585.0 H20 M15.2 586.8 H20 M15.2 588.6 H20" stroke="#333" stroke-width="0.8"/><rect x="8.6" y="590.4" width="13" height="3" fill="#fbd78b" stroke="#e07000" stroke-width="1"/><rect x="8.7" y="608.6" width="12.8" height="10.8" fill="#fff" stroke="#333" stroke-width="1.2"/><rect x="8.1" y="608" width="14" height="3.4" fill="#1a73c8"/><rect x="9.1" y="609" width="12" height="1.4" fill="#7db5e8"/><rect x="8.7" y="634.6" width="12.8" height="10.8" fill="#fff" stroke="#333" stroke-width="1.2"/><rect x="8.1" y="642.4" width="14" height="3.6" fill="#1a73c8"/><rect x="9.1" y="643.4" width="12" height="1.4" fill="#7db5e8"/><rect x="8.7" y="660.6" width="12.8" height="10.8" fill="#fff" stroke="#333" stroke-width="1.2"/><rect x="10.7" y="662.6" width="8.8" height="6.8" fill="#fff" stroke="#333" stroke-width="1"/><rect x="10.4" y="662.2" width="9.4" height="2.4" fill="#1a73c8"/><rect x="11.2" y="663" width="7.8" height="0.8" fill="#7db5e8"/><rect x="8.7" y="686.6" width="12.8" height="9.8" fill="#fff" stroke="#333" stroke-width="1.2"/><path d="M10.6 689.6 H19.6 M10.6 691.6 H19.6 M10.6 693.6 H16.8" stroke="#555" stroke-width="0.9"/><rect x="8.7" y="712.6" width="12.8" height="9.8" fill="#fff" stroke="#333" stroke-width="1.2"/><path d="M9.4 721.8 V719 L12.2 716 L15.6 719.6 L17.8 717.8 L20.8 720.6 V721.8 Z" fill="#7db5e8"/><path d="M9.4 719 L12.2 716 L16.6 720.8 M15.6 719.6 L17.8 717.8 L20.8 720.6" fill="none" stroke="#1a73c8" stroke-width="1.1"/><rect x="18" y="714.4" width="1.8" height="1.8" fill="#e07000"/><path d="M9 754.8 L17.6 746.2 M10.2 756 L18.8 747.4 M9 754.8 Q8.4 756.4 10.2 756 M15 745.4 L17 743.4 L21.6 748 L20.6 749 L19.4 747.8" fill="none" stroke="#1a82d2" stroke-width="1"/><path d="M15.4 751.4 L20 756 M16.6 750.2 L21.2 754.8 M20 756 Q21.6 756.4 21.2 754.8" fill="none" stroke="#1a82d2" stroke-width="1"/><path d="M12.4 743.6 Q14.2 745.4 12.6 747.2 Q10.8 748.6 8.6 747.2 M10.6 745.2 V747 H12.4" fill="none" stroke="#1a82d2" stroke-width="1.2"/></svg>
<svg style="left:0px;top:0px;font-family:'Liberation Sans',sans-serif" width="600" height="915" viewBox="0 0 600 915"><rect x="282.6" y="219.9" width="12.8" height="10.6" fill="#fff" stroke="#222" stroke-width="1.2"/><rect x="285" y="222" width="1.8" height="1" fill="#444"/><rect x="288.8" y="222" width="4.6" height="1" fill="#444"/><rect x="285" y="225" width="1.8" height="1" fill="#444"/><rect x="288.8" y="225" width="4.6" height="1" fill="#444"/><rect x="285" y="228" width="1.8" height="1" fill="#444"/><rect x="288.8" y="228" width="4.6" height="1" fill="#444"/><path d="M319.8 218.2 H324.8 L321.8 222.6 H324 L316.4 231.2 L318.8 225.6 H316.6 Z" fill="#fbd78b" stroke="#e07000" stroke-width="0.9" stroke-linejoin="round"/><g transform="translate(350.9,225)"><rect x="-1.3" y="-7.2" width="2.6" height="3" rx="0.6" transform="rotate(0)" fill="#1a82d2"/><rect x="-1.3" y="-7.2" width="2.6" height="3" rx="0.6" transform="rotate(45)" fill="#1a82d2"/><rect x="-1.3" y="-7.2" width="2.6" height="3" rx="0.6" transform="rotate(90)" fill="#1a82d2"/><rect x="-1.3" y="-7.2" width="2.6" height="3" rx="0.6" transform="rotate(135)" fill="#1a82d2"/><rect x="-1.3" y="-7.2" width="2.6" height="3" rx="0.6" transform="rotate(180)" fill="#1a82d2"/><rect x="-1.3" y="-7.2" width="2.6" height="3" rx="0.6" transform="rotate(225)" fill="#1a82d2"/><rect x="-1.3" y="-7.2" width="2.6" height="3" rx="0.6" transform="rotate(270)" fill="#1a82d2"/><rect x="-1.3" y="-7.2" width="2.6" height="3" rx="0.6" transform="rotate(315)" fill="#1a82d2"/><circle r="4.6" fill="none" stroke="#1a82d2" stroke-width="2.2"/></g><path d="M381.3 220.4 H384.3 V226.2 H381.3 Z" fill="#fff" stroke="#555" stroke-width="1"/><rect x="383.4" y="220" width="1.4" height="6.4" fill="#555"/><rect x="379.4" y="225.8" width="6.6" height="1.1" fill="#555"/><rect x="382.1" y="226.8" width="1" height="4.4" fill="#555"/><path d="M347 259 L351.0 263.2 L355 259" fill="none" stroke="#444" stroke-width="1.3"/><path d="M373.4 260 L376 254.6 L378.6 260 M374.4 258.2 H377.6" fill="none" stroke="#1a82d2" stroke-width="1.1"/><path d="M373.4 262.9 H378.4 L373.4 267.6 H378.8" fill="none" stroke="#222" stroke-width="1.2"/><path d="M384.4 254.4 V267.4 M381.8 264.8 L384.4 267.6 L387 264.8" fill="none" stroke="#222" stroke-width="1.1"/><path d="M366.4 320 L370.1 324 L373.8 320" fill="none" stroke="#444" stroke-width="1.3"/><path d="M366.4 392 L370.1 396 L373.8 392" fill="none" stroke="#444" stroke-width="1.3"/><path d="M366.4 464 L370.1 468 L373.8 464" fill="none" stroke="#444" stroke-width="1.3"/><path d="M241.0 416.9 H237.3 V414.79999999999995 L234.0 418.4 L237.3 422.0 V419.9 H241.0Z" fill="#6a6a6a"/><path d="M281.0 421.9 V418.2 H278.9 L282.5 414.9 L286.1 418.2 H284.0 V421.9Z" fill="#6a6a6a"/><path d="M324.0 416.9 H327.7 V414.79999999999995 L331.0 418.4 L327.7 422.0 V419.9 H324.0Z" fill="#6a6a6a"/><path d="M371.0 414.9 V418.59999999999997 H368.9 L372.5 421.9 L376.1 418.59999999999997 H374.0 V414.9Z" fill="#6a6a6a"/><path d="M41.6 484.6 H56.6 L62.4 490.4 V511.4 H41.6 Z M56.4 484.8 V490.6 H62.2" fill="#fff" stroke="#222" stroke-width="1.2"/><text transform="translate(46.8,509.4) rotate(-32)" font-size="23" font-weight="bold" fill="#fa98a4">A</text><rect x="42" y="896" width="10.8" height="8.8" fill="#fff" stroke="#444" stroke-width="1.1"/><path d="M44 899 H46 M47.4 899 H51 M44 901.6 H46 M47.4 901.6 H51" stroke="#444" stroke-width="1"/><path d="M41.4 896.4 L44.6 892.6 Q48 890.6 52 892 L54.2 895.6 Q50 894.6 46.4 895 Z" fill="#f6b55c" stroke="#e07000" stroke-width="0.8"/><circle cx="52.6" cy="892.6" r="0.9" fill="#5fa85f"/><path d="M143 893.4 V891.6 H152.2 V900 H150" fill="none" stroke="#1a5fa8" stroke-width="1.2"/><rect x="139.6" y="894.6" width="9.8" height="9.6" fill="#fff" stroke="#1a5fa8" stroke-width="1.2"/><rect x="139" y="894" width="11" height="3" fill="#1a5fa8"/><path d="M139.6 900.6 H149.4 M142.8 897 V904 M146.2 897 V904" stroke="#1a5fa8" stroke-width="1"/><path d="M425.2 218.6 H431 L434.6 222.2 V231.6 H425.2 Z M430.8 218.8 V222.4 H434.4" fill="#fff" stroke="#333" stroke-width="1.1"/><path d="M509 219 V231.2 M502.9 225.1 H515.1" stroke="#333" stroke-width="1.6"/></svg>
<svg style="left:0px;top:0px;" width="1672" height="947" viewBox="0 0 1672 947"><rect x="1338.5" y="926.5" width="13" height="13" fill="none" stroke="#fff" stroke-width="1"/><path d="M1343 930.5 H1347 M1343 932.5 H1347 M1343 934.5 H1347" stroke="#fff" stroke-width="1"/><path d="M1341.8 931 L1339.7 932.5 L1341.8 934Z M1348.2 931 L1350.3 932.5 L1348.2 934Z" fill="#fff"/><rect x="1373.5" y="926.5" width="13" height="13" fill="none" stroke="#fff" stroke-width="1"/><path d="M1375.4 931.5 H1384.8 M1375.4 934.5 H1384.8" stroke="#fff" stroke-width="1"/><path d="M1378 929.9 L1380.1 928.2 L1382.2 929.9Z M1378 936.4 L1380.1 938.1 L1382.2 936.4Z" fill="#fff"/><rect x="1408.5" y="926.5" width="13" height="13" fill="none" stroke="#fff" stroke-width="1"/><path d="M1410.4 930.8 H1411.4 V936" fill="none" stroke="#fff" stroke-width="1.1"/><rect x="1413.5" y="930.8" width="1.9" height="4.7" fill="none" stroke="#fff" stroke-width="1"/><rect x="1417.4" y="930.8" width="1.9" height="4.7" fill="none" stroke="#fff" stroke-width="1"/></svg>
</body></html>
